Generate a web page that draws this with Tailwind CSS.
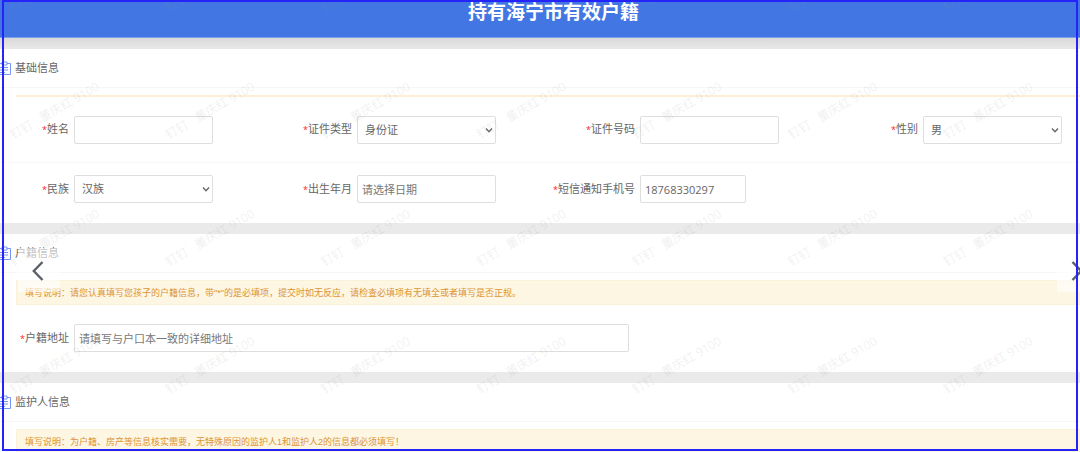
<!DOCTYPE html>
<html lang="zh-CN">
<head>
    <meta charset="UTF-8">
    <meta name="viewport" content="width=device-width, initial-scale=1.0">
    <title>持有海宁市有效户籍</title>
    <script src="https://cdn.jsdelivr.net/npm/@tailwindcss/browser@4"></script>
</head>
<body class="relative h-screen overflow-hidden bg-[#eaeaea] font-['Open_Sans','Noto_Sans_CJK_SC',sans-serif] text-[11px] leading-4 text-[#666]">
    <svg class="hidden">
        <symbol id="clipboard" viewBox="0 0 11 15">
            <path d="M0 2.5H2M7 2.5H10.5V13.5H0M2 1H7V4H2ZM0 6.5H8M0 9H8M0 11.5H5" fill="none" stroke="currentColor" stroke-width="1"/>
        </symbol>
    </svg>

    <header class="flex h-[38px] justify-center border-b border-[#7f9fe9] bg-[#4277e3] pl-[27px]">
        <h1 class="text-[19px] leading-6 font-bold text-white">持有海宁市有效户籍</h1>
    </header>
    <div class="h-[11px] bg-linear-to-b from-[#d9d9d9] to-[#e8e8e8]"></div>

    <form class="flex flex-col gap-[11px]">
        <!-- Basic info -->
        <section class="bg-white pb-5">
            <h2 class="flex h-[39px] items-center gap-1 border-b border-[#f6f6f6]">
                <svg class="h-[15px] w-[11px] text-[#7494f9]"><use href="#clipboard"/></svg>基础信息
            </h2>
            <div class="mt-[7px] ml-4 h-[2px] bg-[#fcefd2]"></div>
            <div class="grid h-[66px] grid-cols-[213fr_283fr_283fr_283fr] items-center border-b border-[#f8f8f8] pr-[18px]">
                <div class="flex items-center justify-end gap-[5px]">
                    <label for="name"><span class="text-[9px] text-[#ff2020]">*</span>姓名</label>
                    <input id="name" type="text" class="h-7 w-[139px] rounded-xs border border-[#dedede] px-1">
                </div>
                <div class="flex items-center justify-end gap-[5px]">
                    <label for="idType"><span class="text-[9px] text-[#ff2020]">*</span>证件类型</label>
                    <div class="relative">
                        <select id="idType" class="h-7 w-[139px] appearance-none rounded-xs border border-[#dedede] px-[7px]"><option>身份证</option></select>
                        <svg class="pointer-events-none absolute top-[11px] right-[3px] h-[7px] w-2" viewBox="0 0 8 7" fill="none" stroke="#666" stroke-width="1.4"><path d="M1 1.5L4 4.7L7 1.5"/></svg>
                    </div>
                </div>
                <div class="flex items-center justify-end gap-[5px]">
                    <label for="idNumber"><span class="text-[9px] text-[#ff2020]">*</span>证件号码</label>
                    <input id="idNumber" type="text" class="h-7 w-[139px] rounded-xs border border-[#dedede] px-1">
                </div>
                <div class="flex items-center justify-end gap-[5px]">
                    <label for="gender"><span class="text-[9px] text-[#ff2020]">*</span>性别</label>
                    <div class="relative">
                        <select id="gender" class="h-7 w-[139px] appearance-none rounded-xs border border-[#dedede] px-[7px]"><option>男</option><option>女</option></select>
                        <svg class="pointer-events-none absolute top-[11px] right-[3px] h-[7px] w-2" viewBox="0 0 8 7" fill="none" stroke="#666" stroke-width="1.4"><path d="M1 1.5L4 4.7L7 1.5"/></svg>
                    </div>
                </div>
            </div>
            <div class="mt-3 grid grid-cols-[213fr_283fr_283fr_283fr] items-center pr-[18px]">
                <div class="flex items-center justify-end gap-[5px]">
                    <label for="nation"><span class="text-[9px] text-[#ff2020]">*</span>民族</label>
                    <div class="relative">
                        <select id="nation" class="h-7 w-[139px] appearance-none rounded-xs border border-[#dedede] px-[7px]"><option>汉族</option></select>
                        <svg class="pointer-events-none absolute top-[11px] right-[3px] h-[7px] w-2" viewBox="0 0 8 7" fill="none" stroke="#666" stroke-width="1.4"><path d="M1 1.5L4 4.7L7 1.5"/></svg>
                    </div>
                </div>
                <div class="flex items-center justify-end gap-[5px]">
                    <label for="birth"><span class="text-[9px] text-[#ff2020]">*</span>出生年月</label>
                    <input id="birth" type="text" placeholder="请选择日期" class="h-7 w-[139px] rounded-xs border border-[#dedede] px-1 placeholder:text-[#777]">
                </div>
                <div class="flex items-center justify-end gap-[5px]">
                    <label for="phone"><span class="text-[9px] text-[#ff2020]">*</span>短信通知手机号</label>
                    <div class="flex w-[139px]">
                        <input id="phone" type="tel" value="18768330297" class="h-7 w-[106px] rounded-xs border border-[#dedede] px-1">
                    </div>
                </div>
            </div>
        </section>

        <!-- Household info -->
        <section class="bg-white pb-5">
            <h2 class="flex h-[39px] items-center gap-1 border-b border-[#f6f6f6]">
                <svg class="h-[15px] w-[11px] text-[#7494f9]"><use href="#clipboard"/></svg>户籍信息
            </h2>
            <p class="mt-[7px] ml-4 h-[25px] rounded-l-xs border border-r-0 border-[#fbf0d8] bg-[#fdf6e3] px-2 font-['Liberation_Sans','Noto_Sans_CJK_SC',sans-serif] text-[9px] leading-6 text-[#dc9433]">填写说明：请您认真填写您孩子的户籍信息，带"*"的是必填项，提交时如无反应，请检查必填项有无填全或者填写是否正规。</p>
            <div class="mt-[19px] flex items-center gap-[5px]">
                <label for="address" class="w-[69px] text-right"><span class="text-[9px] text-[#ff2020]">*</span>户籍地址</label>
                <input id="address" type="text" placeholder="请填写与户口本一致的详细地址" class="h-7 w-[555px] rounded-xs border border-[#dedede] px-1 placeholder:text-[#777]">
            </div>
        </section>

        <!-- Guardian info -->
        <section class="bg-white">
            <h2 class="flex h-[39px] items-center gap-1 border-b border-[#f6f6f6]">
                <svg class="h-[15px] w-[11px] text-[#7494f9]"><use href="#clipboard"/></svg>监护人信息
            </h2>
            <p class="mt-[7px] ml-4 h-[25px] rounded-l-xs border border-r-0 border-[#fbf0d8] bg-[#fdf6e3] px-2 font-['Liberation_Sans','Noto_Sans_CJK_SC',sans-serif] text-[9px] leading-6 text-[#dc9433]">填写说明：为户籍、房产等信息核实需要，无特殊原因的监护人1和监护人2的信息都必须填写！</p>
        </section>
    </form>

    <!-- Watermark tiles, filled by the script below -->
    <svg id="watermark" class="pointer-events-none absolute inset-0 size-full font-['Open_Sans','Noto_Sans_CJK_SC',sans-serif] text-[12px]" aria-hidden="true"></svg>

    <!-- Previous / next -->
    <button type="button" aria-label="上一张" class="absolute top-[248px] left-[18px] flex h-11 w-[42px] items-center justify-center rounded-xs bg-white/60 pt-[2px] pr-[2px]">
        <svg class="h-5 w-3" viewBox="0 0 12 20" fill="none" stroke="#5c6066" stroke-width="2.4"><path d="M10.5 1L1.8 10L10.5 19"/></svg>
    </button>
    <button type="button" aria-label="下一张" class="absolute top-[248px] -right-[19px] flex h-11 w-[42px] items-center justify-center rounded-xs bg-white/60 pt-[2px] pr-[2px]">
        <svg class="h-5 w-3" viewBox="0 0 12 20" fill="none" stroke="#5c6066" stroke-width="2.4"><path d="M1.5 1L10.2 10L1.5 19"/></svg>
    </button>

    <!-- Selection frame -->
    <div class="pointer-events-none absolute top-0 right-[2px] bottom-[1px] left-[2px] border-2 border-[#2424fa]"></div>

    <script>
        const watermark = document.getElementById("watermark");
        let tiles = "";
        for (let row = 0; row < 4; row++) {
            for (let col = 0; col < 7; col++) {
                const x = 13 + col * 155.6;
                const y = 12 + row * 127.3;
                // the name of the top row would lie above the page
                const name = row > 0 ? `<text x="34">董庆红 9100</text>` : "";
                tiles += `<g transform="translate(${x} ${y}) rotate(-30)" fill="#8c8c8c" fill-opacity="0.14"><text>钉钉</text>${name}</g>`;
            }
        }
        watermark.innerHTML = tiles;
    </script>
</body>
</html>
